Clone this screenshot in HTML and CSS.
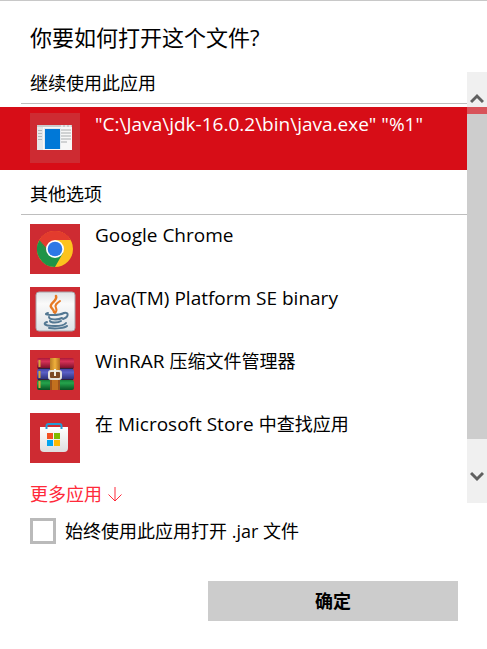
FILE: index.html
```html
<!DOCTYPE html>
<html lang="zh-CN">
<head>
    <meta charset="UTF-8" />
    <meta name="viewport" content="width=device-width, initial-scale=1.0"/>
    <title>你要如何打开这个文件?</title>
    <link rel="stylesheet" href="styles.css">
</head>
<body>
    <form class="dialog">
        <h1 class="title">你要如何打开这个文件?</h1>

        <div class="chooser">
            <div class="app-list">
                <h2 class="group-title">继续使用此应用</h2>
                <button type="button" class="app selected">
                    <svg class="app-icon" viewBox="0 0 50 50" aria-hidden="true">
                        <rect x="7" y="12" width="35" height="25" fill="#f7f7f7"/>
                        <rect x="7" y="12" width="35" height="2" fill="#c9cccd"/>
                        <path d="M31 13h2M35 13h2M39 13h2" stroke="#fff"/>
                        <rect x="7" y="14" width="6" height="23" fill="#e6e7e8"/>
                        <path d="M8 17.500h4M8 20.500h4M8 23.500h4M8 26.500h4" stroke="#b5b8ba"/>
                        <path d="M31 17h10M31 20h10M31 23h10M31 26h10M31 29h6" stroke="#c4c6c8" stroke-width="1.500"/>
                        <rect x="14" y="15" width="17" height="21" fill="#e3e9ee"/>
                        <rect x="15" y="16" width="15" height="20" fill="#0078d7"/>
                    </svg>
                    <span class="app-name">"C:\Java\jdk-16.0.2\bin\java.exe" "%1"</span>
                </button>

                <h2 class="group-title other">其他选项</h2>
                <button type="button" class="app">
                    <svg class="app-icon" viewBox="0 0 50 50" aria-hidden="true">
                        <circle cx="25" cy="25" r="18" fill="#fcc31e"/>
                        <path d="M25 25 9.400 16A18 18 0 0 0 25 43l8-14z" fill="#1e9447"/>
                        <path d="M9.400 16A18 18 0 0 1 40.600 16H25l-8 13z" fill="#e33b2e"/>
                        <path d="M9.400 16 17.200 29.500 25 25z" fill="#1e9447"/>
                        <path d="M25 16h15.600A18 18 0 0 0 9.400 16L17 25z" fill="#e33b2e"/>
                        <circle cx="25" cy="25" r="9" fill="#fff"/>
                        <circle cx="25" cy="25" r="7.300" fill="#2d78e6"/>
                    </svg>
                    <span class="app-name">Google Chrome</span>
                </button>
                <button type="button" class="app">
                    <svg class="app-icon" viewBox="0 0 50 50" aria-hidden="true">
                        <defs>
                            <linearGradient id="tile" x1="0" y1="0" x2="0" y2="1">
                                <stop offset="0" stop-color="#dfe3e6"/>
                                <stop offset=".3" stop-color="#fafafa"/>
                                <stop offset="1" stop-color="#dde2e6"/>
                            </linearGradient>
                        </defs>
                        <rect x="6" y="5" width="39" height="39" rx="3" fill="url(#tile)" stroke="#a9a4aa"/>
                        <g fill="none" stroke="#e77a24" stroke-linecap="round">
                            <path d="M26 9c2 5-7 7-5 11 1 2 3 3 3 5" stroke-width="2.500"/>
                            <path d="M30 14c-3 2-6 4-4 7 1 2 1 3-1 5" stroke-width="2"/>
                        </g>
                        <g fill="none" stroke="#527792" stroke-linecap="round">
                            <path d="M18 26c-4 1-2 2 5 2 5 0 9-1 11-2" stroke-width="2"/>
                            <path d="M34 26c5-1 5 4-1 6" stroke-width="2"/>
                            <path d="M19 30c0 3 9 3 13 1M20 34c1 2 8 2 11 0" stroke-width="2"/>
                            <path d="M17 35c-10 4 15 6 19 1M19 41c7 1 16 0 18-2" stroke-width="2"/>
                        </g>
                    </svg>
                    <span class="app-name">Java(TM) Platform SE binary</span>
                </button>
                <button type="button" class="app">
                    <svg class="app-icon" viewBox="0 0 50 50" aria-hidden="true">
                        <defs>
                            <linearGradient id="book-red" x1="0" y1="0" x2="0" y2="1">
                                <stop offset="0" stop-color="#a91839"/>
                                <stop offset=".3" stop-color="#d73258"/>
                                <stop offset="1" stop-color="#700c25"/>
                            </linearGradient>
                            <linearGradient id="book-blue" x1="0" y1="0" x2="0" y2="1">
                                <stop offset="0" stop-color="#4545a5"/>
                                <stop offset=".3" stop-color="#5b60c7"/>
                                <stop offset="1" stop-color="#292b70"/>
                            </linearGradient>
                            <linearGradient id="book-green" x1="0" y1="0" x2="0" y2="1">
                                <stop offset="0" stop-color="#16823a"/>
                                <stop offset=".3" stop-color="#25a44c"/>
                                <stop offset="1" stop-color="#075222"/>
                            </linearGradient>
                            <linearGradient id="strap" x1="0" y1="0" x2="1" y2="0">
                                <stop offset="0" stop-color="#b87a24"/>
                                <stop offset=".5" stop-color="#efb13c"/>
                                <stop offset="1" stop-color="#b06a1e"/>
                            </linearGradient>
                        </defs>
                        <rect x="7" y="8" width="37" height="11" rx="2" fill="url(#book-red)"/>
                        <rect x="7" y="19" width="37" height="11" rx="2" fill="url(#book-blue)"/>
                        <rect x="7" y="30" width="37" height="10" rx="2" fill="url(#book-green)"/>
                        <path d="M9.500 10v7M9.500 21v7M9.500 31v7" stroke="#d6a73a" stroke-width="2"/>
                        <path d="M8 18.500h35M8 29.500h35" stroke="#33203a"/>
                        <rect x="20" y="8" width="10" height="12" fill="url(#strap)"/>
                        <rect x="20" y="20" width="10" height="20" fill="#9c521b"/>
                        <rect x="22" y="30" width="6" height="10" fill="#c2701e"/>
                        <rect x="19" y="21" width="12" height="8" rx="2" fill="#7b4823" stroke="#e4e2dc" stroke-width="2"/>
                        <path d="M25 19v7" stroke="#f4eee0" stroke-width="2"/>
                    </svg>
                    <span class="app-name">WinRAR <span class="cjk">压缩文件管理器</span></span>
                </button>
                <button type="button" class="app">
                    <svg class="app-icon" viewBox="0 0 50 50" aria-hidden="true">
                        <defs>
                            <linearGradient id="bag" x1="0" y1="0" x2="0" y2="1">
                                <stop offset="0" stop-color="#fff"/>
                                <stop offset="1" stop-color="#dedede"/>
                            </linearGradient>
                        </defs>
                        <path d="M10 14h28v21q0 4-4 4H14q-4 0-4-4z" fill="url(#bag)"/>
                        <path d="M16.500 16v-3q0-2 2-2h11q2 0 2 2v3" fill="none" stroke="#249bd5" stroke-width="2"/>
                        <rect x="17" y="20" width="6" height="6" fill="#f25022"/>
                        <rect x="24" y="20" width="6" height="6" fill="#7fba00"/>
                        <rect x="17" y="27" width="6" height="6" fill="#00a4ef"/>
                        <rect x="24" y="27" width="6" height="6" fill="#ffb900"/>
                    </svg>
                    <span class="app-name"><span class="cjk">在</span> Microsoft Store <span class="cjk">中查找应用</span></span>
                </button>
            </div>

            <div class="scrollbar">
                <button type="button" class="scroll-button up" aria-label="向上滚动">
                    <svg class="chevron" viewBox="0 0 14 11" aria-hidden="true"><path d="M1 9l6-6 6 6"/></svg>
                </button>
                <div class="thumb"></div>
                <button type="button" class="scroll-button down" aria-label="向下滚动">
                    <svg class="chevron" viewBox="0 0 14 11" aria-hidden="true"><path d="M1 2l6 6 6-6"/></svg>
                </button>
            </div>

            <a class="more" href="#">更多应用
                <svg class="arrow" viewBox="0 0 16 16" aria-hidden="true"><path d="M8 1v14M1.500 8.500 8 15l6.500-6.500"/></svg>
            </a>
        </div>

        <div class="always">
            <input type="checkbox" id="always-use" class="checkbox">
            <label for="always-use">始终使用此应用打开 .jar 文件</label>
        </div>

        <div class="actions">
            <button type="submit" class="ok">确定</button>
        </div>
    </form>
</body>
</html>
```
FILE: styles.css
```css
* {
    box-sizing: border-box;
}

body {
    margin: 0;
    background: #fff;
    color: #000;
    font-family: "Open Sans", "Noto Sans CJK SC", sans-serif;
    font-size: 18px;
    line-height: 22px;
}

button {
    border: none;
    padding: 0;
    font: inherit;
    color: inherit;
    cursor: pointer;
}

.dialog {
    border-top: 1px solid #c8c8c8;
}

.title {
    margin: 0;
    padding: 21px 30px 20px;
    font-size: 22px;
    font-weight: 400;
    line-height: 30px;
}

.chooser {
    display: grid;
    grid-template-columns: 1fr 20px;
    grid-template-rows: auto 33px;
}

.group-title {
    margin: 0 0 3px 21px;
    padding: 0 9px 9px;
    border-bottom: 1px solid #bebebe;
    font-size: 18px;
    font-weight: 400;
}

.group-title.other {
    margin-top: 13px;
}

.app {
    display: flex;
    align-items: flex-start;
    gap: 15px;
    width: 100%;
    height: 63px;
    padding: 6px 30px;
    background: none;
    text-align: left;
    white-space: nowrap;
}

.app.selected {
    background: #d70d17;
    color: #fff;
}

.app-icon {
    flex: none;
    width: 50px;
    height: 50px;
    background: #ce2b32;
}

.app-name {
    font-size: 19px;
}

.cjk {
    font-size: 18px;
}

.scrollbar {
    grid-column: 2;
    grid-row: 1 / 3;
    display: flex;
    flex-direction: column;
    background: #f0f0f0;
}

.scroll-button {
    display: flex;
    justify-content: center;
    background: none;
}

.scroll-button.up {
    height: 35px;
    padding-top: 21px;
}

.scroll-button.down {
    height: 64px;
    padding-top: 32px;
}

.chevron {
    width: 14px;
    height: 11px;
    fill: none;
    stroke: #606060;
    stroke-width: 3;
}

.thumb {
    flex: 1;
    border-top: 7px solid #d8535a;
    background: #cdcdcd;
}

.more {
    grid-row: 2;
    display: flex;
    align-items: center;
    gap: 5px;
    padding: 14px 30px 0;
    color: #ff2a3a;
    text-decoration: none;
}

.arrow {
    width: 16px;
    height: 16px;
    fill: none;
    stroke: currentColor;
}

.always {
    display: flex;
    align-items: center;
    gap: 9px;
    padding: 15px 30px 0;
}

.checkbox {
    appearance: none;
    width: 26px;
    height: 26px;
    margin: 0;
    border: 3px solid #bababa;
    background: #fff;
}

.checkbox:checked {
    background: #d70d17;
}

.actions {
    display: flex;
    justify-content: flex-end;
    padding: 37px 29px 28px;
}

.ok {
    width: 250px;
    height: 40px;
    background: #ccc;
    font-weight: 700;
}
```
